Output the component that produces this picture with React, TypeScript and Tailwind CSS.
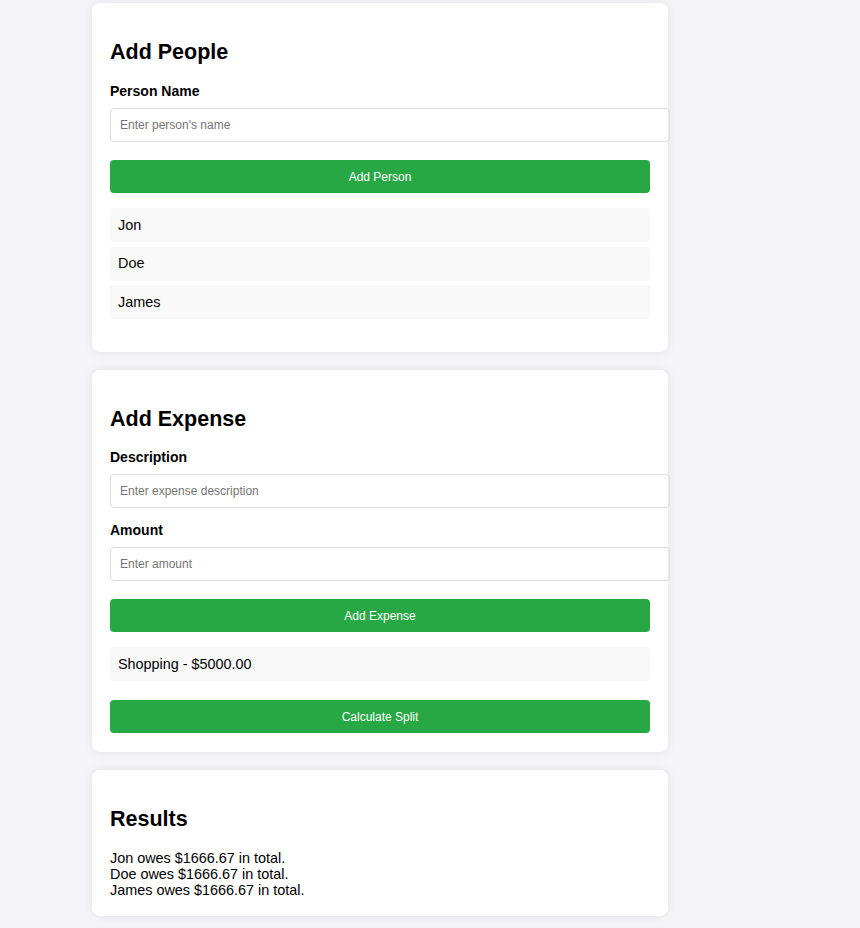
import { useState } from 'react';

const people = ['Jon', 'Doe', 'James'];

const expenses = [{ description: 'Shopping', amount: 5000 }];

const Card = ({ title, children, pb }: { title: string; children: React.ReactNode; pb: string }) => (
  <div className={`bg-white rounded-[8px] shadow-[0_0_10px_rgba(0,0,0,0.08)] px-[18px] pt-[36px] ${pb}`}>
    <h2 className="text-[21.5px] leading-[26px] font-bold text-black">{title}</h2>
    {children}
  </div>
);

const Field = ({
  label,
  placeholder,
  className,
}: {
  label: string;
  placeholder: string;
  className: string;
}) => {
  const [value, setValue] = useState('');
  return (
    <div className={className}>
      <label className="block text-[14px] leading-[17px] font-bold text-black">{label}</label>
      <input
        type="text"
        value={value}
        onChange={e => setValue(e.target.value)}
        placeholder={placeholder}
        className="mt-[8px] box-content block w-full h-[32px] px-[9px] border border-[#dddddd] rounded-[4px] text-[12px] text-black placeholder:text-[#757575] focus:outline-none"
      />
    </div>
  );
};

const GreenButton = ({ label, className }: { label: string; className: string }) => (
  <button
    className={`block w-full h-[33px] bg-[#28a745] text-white text-[12px] rounded-[4px] ${className}`}
  >
    {label}
  </button>
);

const ListItem = ({ text }: { text: string }) => (
  <div className="h-[34px] bg-[#f9f9f9] rounded-[4px] pl-[8px] pt-[1px] flex items-center text-[14.4px] text-black">
    {text}
  </div>
);

export default function App() {
  const share = expenses.reduce((sum, e) => sum + e.amount, 0) / people.length;

  return (
    <div className="min-h-screen bg-[#f4f4f9] pl-[92px] pt-[3px] font-['Liberation_Sans',Arial,sans-serif]">
      <div className="w-[576px] flex flex-col gap-[18px]">
        <Card title="Add People" pb="pb-[33px]">
          <Field label="Person Name" placeholder="Enter person's name" className="mt-[18px]" />
          <GreenButton label="Add Person" className="mt-[18px]" />
          <div className="mt-[15px] flex flex-col gap-[4.5px]">
            {people.map(p => (
              <ListItem key={p} text={p} />
            ))}
          </div>
        </Card>

        <Card title="Add Expense" pb="pb-[19px]">
          <Field label="Description" placeholder="Enter expense description" className="mt-[17px]" />
          <Field label="Amount" placeholder="Enter amount" className="mt-[14px]" />
          <GreenButton label="Add Expense" className="mt-[18px]" />
          <div className="mt-[15px] flex flex-col gap-[4px]">
            {expenses.map(e => (
              <ListItem key={e.description} text={`${e.description} - $${e.amount.toFixed(2)}`} />
            ))}
          </div>
          <GreenButton label="Calculate Split" className="mt-[19px]" />
        </Card>

        <Card title="Results" pb="pb-[18px]">
          <div className="mt-[18px] text-[14.4px] leading-[16px] text-black">
            {people.map(p => (
              <p key={p}>
                {p} owes ${share.toFixed(2)} in total.
              </p>
            ))}
          </div>
        </Card>
      </div>
    </div>
  );
}
